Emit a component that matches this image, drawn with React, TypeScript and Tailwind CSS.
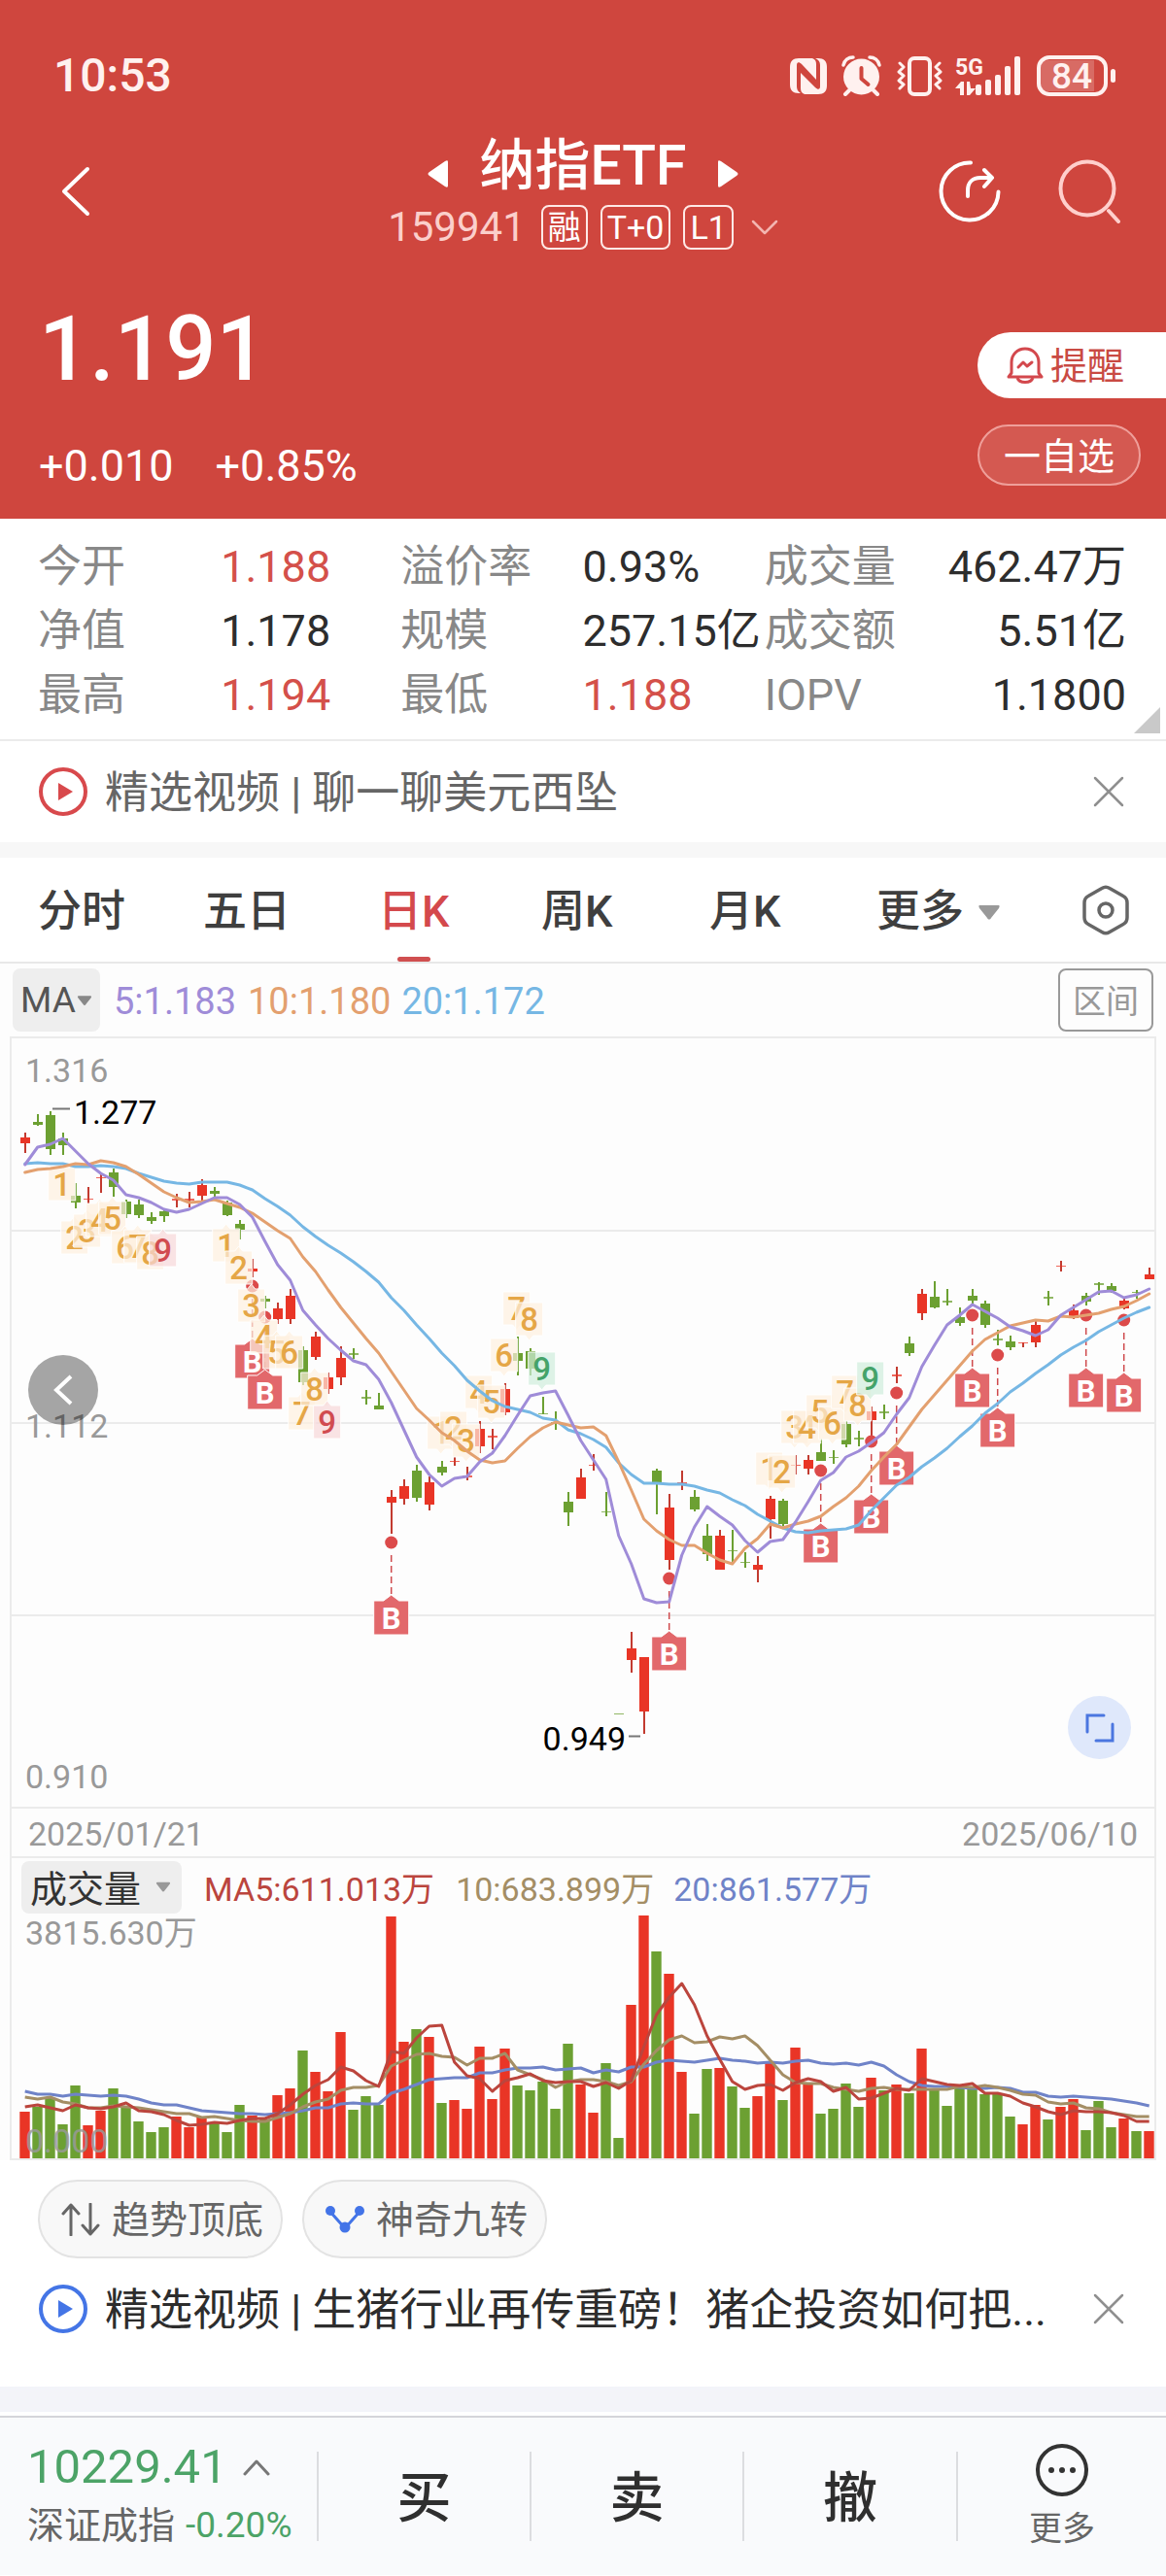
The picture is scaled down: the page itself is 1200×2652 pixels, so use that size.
import type { ReactNode } from "react";

const UP = "#e93526";
const DOWN = "#6ca032";

// high, low, body top, body bottom (plot pixels from the top of the panel), up day, volume
type Candle = [number, number, number, number, 0 | 1, number];

const CANDLES: Candle[] = [
  [98, 119, 103, 109, 1, 48],
  [79, 91, 87, 90, 0, 53],
  [76, 121, 80, 115, 0, 62],
  [98, 121, 104, 111, 0, 35],
  [150, 176, 163, 170, 0, 75],
  [154, 171, 166, 167, 1, 34],
  [139, 160, 144, 145, 1, 49],
  [135, 164, 139, 154, 0, 72],
  [167, 186, 169, 182, 0, 54],
  [167, 186, 172, 183, 0, 38],
  [180, 192, 185, 189, 0, 27],
  [178, 190, 179, 184, 0, 32],
  [161, 175, 166, 168, 1, 43],
  [159, 175, 166, 168, 1, 32],
  [146, 168, 152, 163, 1, 43],
  [154, 164, 158, 161, 0, 37],
  [168, 184, 170, 183, 0, 27],
  [188, 208, 192, 198, 0, 55],
  [228, 247, 238, 241, 1, 44],
  [266, 279, 269, 272, 0, 40],
  [273, 295, 279, 290, 1, 65],
  [259, 295, 266, 290, 1, 72],
  [318, 358, 322, 355, 0, 111],
  [303, 332, 308, 329, 1, 89],
  [345, 367, 350, 362, 1, 69],
  [318, 358, 330, 350, 1, 130],
  [320, 331, 325, 327, 0, 50],
  [363, 378, 370, 372, 0, 64],
  [366, 383, 379, 383, 0, 55],
  [466, 511, 473, 479, 1, 249],
  [455, 481, 462, 475, 1, 120],
  [440, 478, 446, 474, 0, 133],
  [452, 487, 458, 481, 1, 125],
  [436, 451, 442, 448, 0, 57],
  [432, 441, 436, 437, 1, 60],
  [442, 456, 451, 453, 1, 51],
  [395, 428, 403, 421, 1, 115],
  [403, 424, 410, 412, 1, 61],
  [356, 389, 362, 386, 1, 113],
  [308, 348, 325, 333, 0, 75],
  [320, 348, 323, 341, 0, 70],
  [370, 388, 387, 388, 0, 79],
  [385, 404, 396, 398, 0, 51],
  [468, 503, 478, 489, 0, 118],
  [444, 475, 453, 475, 1, 76],
  [429, 446, 440, 441, 1, 47],
  [468, 493, 488, 489, 0, 98],
  [697, 697, 696, 697, 0, 21],
  [612, 654, 629, 641, 1, 158],
  [638, 717, 638, 694, 1, 250],
  [444, 491, 446, 458, 0, 213],
  [470, 548, 484, 538, 1, 190],
  [446, 466, 458, 460, 1, 89],
  [466, 488, 473, 486, 0, 46],
  [501, 539, 513, 532, 0, 92],
  [507, 548, 513, 548, 1, 93],
  [507, 540, 528, 529, 0, 74],
  [530, 546, 540, 541, 0, 52],
  [534, 561, 543, 548, 1, 64],
  [472, 516, 475, 496, 1, 98],
  [475, 503, 477, 501, 0, 60],
  [430, 450, 440, 441, 1, 114],
  [430, 450, 435, 444, 1, 76],
  [413, 436, 427, 436, 0, 46],
  [425, 439, 432, 433, 0, 51],
  [395, 422, 398, 419, 0, 77],
  [405, 421, 412, 414, 0, 53],
  [380, 413, 385, 394, 1, 83],
  [378, 393, 385, 387, 0, 70],
  [339, 356, 347, 349, 1, 76],
  [308, 328, 315, 325, 0, 67],
  [259, 291, 264, 284, 1, 113],
  [251, 279, 267, 278, 0, 70],
  [259, 276, 271, 273, 0, 54],
  [278, 297, 288, 294, 0, 73],
  [259, 274, 266, 271, 0, 73],
  [271, 299, 274, 296, 0, 66],
  [301, 317, 310, 312, 0, 67],
  [307, 322, 313, 319, 0, 43],
  [314, 319, 314, 315, 1, 35],
  [292, 319, 296, 314, 1, 55],
  [261, 276, 267, 269, 0, 40],
  [230, 241, 235, 236, 1, 53],
  [275, 290, 281, 289, 1, 61],
  [263, 276, 266, 272, 0, 29],
  [252, 265, 253, 255, 0, 59],
  [253, 263, 256, 261, 0, 32],
  [269, 280, 271, 279, 1, 41],
  [260, 269, 262, 263, 0, 28],
  [237, 249, 244, 249, 1, 28],
];

const PRICE_MA5 = [
  131, 113, 110, 104, 117, 130, 140, 147, 162, 165, 170, 177, 180, 177, 171, 165, 165, 172, 185, 210,
  234, 250, 281, 296, 310, 322, 333, 337, 352, 376, 404, 432, 450, 462, 454, 452, 437, 428, 410, 389,
  369, 366, 364, 389, 415, 435, 455, 513, 542, 578, 582, 581, 533, 504, 483, 493, 502, 518, 530, 519,
  517, 499, 478, 456, 448, 432, 426, 417, 407, 388, 371, 339, 317, 296, 286, 275, 282, 289, 298, 302,
  307, 301, 286, 278, 270, 262, 261, 268, 265, 259,
];

const PRICE_MA10 = [
  139, 136, 135, 133, 130, 131, 127, 129, 133, 141, 150, 159, 165, 170, 169, 167, 171, 175, 181, 190,
  199, 207, 226, 241, 260, 278, 294, 310, 325, 344, 363, 382, 394, 407, 415, 426, 435, 438, 436, 423,
  411, 402, 396, 399, 402, 401, 410, 437, 466, 496, 508, 517, 523, 523, 531, 538, 542, 526, 516, 501,
  505, 501, 498, 493, 483, 474, 462, 446, 432, 419, 401, 383, 368, 353, 338, 323, 311, 304, 297, 294,
  291, 292, 287, 288, 286, 284, 280, 277, 271, 264,
];

const PRICE_MA20 = [
  130, 129, 130, 130, 133, 133, 132, 133, 135, 140, 144, 148, 150, 151, 149, 149, 149, 152, 157, 166,
  174, 183, 195, 205, 214, 222, 231, 241, 252, 268, 281, 296, 310, 325, 338, 353, 364, 374, 380, 383,
  386, 392, 394, 404, 408, 414, 422, 438, 450, 459, 459, 460, 460, 462, 466, 469, 476, 482, 491, 498,
  505, 509, 510, 508, 507, 506, 502, 487, 474, 461, 453, 442, 433, 423, 411, 400, 387, 377, 365, 356,
  346, 337, 327, 319, 312, 303, 296, 289, 283, 278,
];

// leading averages reach back before the first visible day
const VOL_HEAD5 = [53, 55, 52, 49];
const VOL_HEAD10 = [63, 61, 63, 58, 56, 52, 52, 54, 53];
const VOL_HEAD20 = [69, 66, 66, 64, 66, 65, 64, 65, 64, 61, 57, 55, 55, 52, 49, 48, 47, 46, 46];

// day index, y of the trade dot
const BUYS: [number, number][] = [
  [18, 256],
  [19, 288],
  [29, 520],
  [51, 557],
  [63, 446],
  [67, 416],
  [69, 366],
  [75, 286],
  [77, 327],
  [84, 286],
  [87, 291],
];

// day index, digit, top of the tag, pointer direction
const NINES: [number, number, number, "up" | "down"][] = [
  [3, 1, 134, "up"],
  [4, 2, 189, "up"],
  [5, 3, 182, "up"],
  [6, 4, 171, "up"],
  [7, 5, 169, "up"],
  [8, 6, 199, "up"],
  [9, 7, 198, "up"],
  [10, 8, 205, "up"],
  [11, 9, 202, "up"],
  [16, 1, 197, "up"],
  [17, 2, 220, "up"],
  [18, 3, 259, "up"],
  [19, 4, 291, "up"],
  [20, 5, 307, "up"],
  [21, 6, 307, "up"],
  [22, 7, 370, "up"],
  [23, 8, 345, "up"],
  [24, 9, 379, "up"],
  [33, 1, 390, "down"],
  [34, 2, 385, "down"],
  [35, 3, 398, "down"],
  [36, 4, 348, "down"],
  [37, 5, 358, "down"],
  [38, 6, 310, "down"],
  [39, 7, 262, "down"],
  [40, 8, 273, "down"],
  [41, 9, 324, "down"],
  [59, 1, 427, "down"],
  [60, 2, 430, "down"],
  [61, 3, 384, "down"],
  [62, 4, 384, "down"],
  [63, 5, 368, "down"],
  [64, 6, 380, "down"],
  [65, 7, 348, "down"],
  [66, 8, 361, "down"],
  [67, 9, 334, "down"],
];

const xOf = (i: number) => 25.7 + 13 * i;

const linePath = (ys: number[]) => "M" + ys.map((y, i) => `${xOf(i).toFixed(1)} ${y}`).join("L");

function volumeAverage(head: number[], span: number) {
  return CANDLES.map((_, i) => {
    if (i < head.length) return 250 - head[i];
    const days = CANDLES.slice(i - span + 1, i + 1);
    return 250 - Math.round(days.reduce((sum, c) => sum + c[5], 0) / span);
  });
}

function BuyTag({ x, dot }: { x: number; dot: number }) {
  const top = dot + 60;
  return (
    <g>
      <circle cx={x} cy={dot} r="6.5" fill="#dc4a4a" />
      <path d={`M${x} ${dot + 13}V${top - 6}`} stroke="#cf4a4d" strokeWidth="1.5" strokeDasharray="7 4" />
      <path
        d={`M${x - 18} ${top}h10l8 -6l8 6h10v35h-36z`}
        fill="#e2686b"
        stroke="#fff"
        strokeWidth="1"
      />
      <text x={x} y={top + 29} fontSize="31" fontWeight="700" textAnchor="middle" fill="#fff">
        B
      </text>
    </g>
  );
}

function NineTag({ x, n, top, dir }: { x: number; n: number; top: number; dir: "up" | "down" }) {
  const last = n === 9;
  const fill = !last ? "#fdf0de" : dir === "up" ? "#f7d7d9" : "#cfecdc";
  const ink = !last ? "#e5a646" : dir === "up" ? "#d14b50" : "#45a36a";
  const d =
    dir === "up"
      ? `M${x - 14} ${top}h10l4 -5l4 5h10v34h-28z`
      : `M${x - 14} ${top}h28v34h-10l-4 5l-4 -5h-10z`;
  return (
    <g>
      <path d={d} fill={fill} fillOpacity="0.7" stroke="#fff" strokeOpacity="0.9" strokeWidth="1" />
      <text x={x} y={top + 29} fontSize="33" fontWeight="500" textAnchor="middle" fill={ink}>
        {n}
      </text>
    </g>
  );
}

function PriceChart() {
  return (
    <svg viewBox="12 1 1176 791" className="block w-full" role="img" aria-label="日K">
      <g stroke="#ebebeb" strokeWidth="2">
        <path d="M12 199H1188M12 397H1188M12 595H1188" />
      </g>
      <g fontSize="34" fill="#999">
        <text x="26" y="46">1.316</text>
        <text x="26" y="412">1.112</text>
        <text x="26" y="773">0.910</text>
      </g>
      {CANDLES.map(([high, low, top, bottom, up], i) => {
        const x = Math.round(xOf(i));
        const thin = bottom - top <= 2;
        return (
          <g key={i} fill={up ? UP : DOWN}>
            {high !== low && <rect x={x - 1} y={high} width="2" height={low - high} fill={up ? "#c23b30" : DOWN} />}
            <rect x={x - 5} y={top} width="10" height={Math.max(bottom - top, 1)} opacity={thin ? 0.75 : 1} />
          </g>
        );
      })}
      {BUYS.map(([i, dot]) => (
        <BuyTag key={i} x={xOf(i)} dot={dot} />
      ))}
      {NINES.map(([i, n, top, dir]) => (
        <NineTag key={i} x={xOf(i) - 1} n={n} top={top} dir={dir} />
      ))}
      <g fill="none" strokeWidth="3" strokeLinejoin="round" strokeLinecap="round">
        <path d={linePath(PRICE_MA20)} stroke="#76b7e4" />
        <path d={linePath(PRICE_MA10)} stroke="#e3a06f" />
        <path d={linePath(PRICE_MA5)} stroke="#9f8cd8" />
      </g>
      <path d="M54 73.500H72M647 719.500H659" stroke="#777" strokeWidth="2" />
      <g fontSize="34" fill="#000">
        <text x="76" y="89">1.277</text>
        <text x="644" y="734" textAnchor="end">0.949</text>
      </g>
    </svg>
  );
}

function VolumeChart() {
  return (
    <svg viewBox="12 0 1176 250" className="block w-full overflow-visible" role="img" aria-label="成交量">
      {CANDLES.map((c, i) => (
        <rect key={i} x={xOf(i) - 5.4} y={250 - c[5]} width="10.4" height={c[5]} fill={c[4] ? UP : DOWN} />
      ))}
      <g fill="none" strokeWidth="3" strokeLinejoin="round">
        <path d={linePath(volumeAverage(VOL_HEAD20, 20))} stroke="#6f83c8" />
        <path d={linePath(volumeAverage(VOL_HEAD10, 10))} stroke="#a48e65" />
        <path d={linePath(volumeAverage(VOL_HEAD5, 5))} stroke="#bb453d" />
      </g>
      <g fontSize="34" fill="#999">
        <text x="26" y="30">3815.630万</text>
        <text x="26" y="244" fillOpacity="0.85">0.000</text>
      </g>
    </svg>
  );
}

function StatusIcons() {
  return (
    <div className="flex items-center text-[#fff1ef]" aria-hidden>
      <svg className="mr-[15px] h-[42px] w-[38px]" viewBox="0 0 38 42" fill="currentColor">
        <path d="M9 3h14c3 1 4 3 4 6v16L12 9C9 6 7 7 7 10v22c0 3 1 5 4 7H9c-6 0-9-3-9-9V12C0 6 3 3 9 3z" />
        <path d="M26 3h3c6 0 9 3 9 9v19c0 6-3 9-9 9H15c-3-1-4-3-4-6V18l15 15c3 3 5 2 5-1V10c0-3-1-5-5-7z" />
      </svg>
      <svg className="mr-[16px] h-[42px] w-[41px]" viewBox="0 0 41 42" fill="none" stroke="currentColor">
        <circle cx="20.500" cy="22" r="18.500" fill="currentColor" stroke="none" />
        <path d="M2 10C3 5 7 2 12 2M29 2c5 0 9 3 10 8" strokeWidth="3.500" strokeLinecap="round" />
        <path d="M8 36l-4 4M33 36l4 4" strokeWidth="4" strokeLinecap="round" />
        <path d="M20.500 13v11l7 6" stroke="#cf463e" strokeWidth="4" strokeLinecap="round" strokeLinejoin="round" />
      </svg>
      <svg className="mr-[13px] h-[42px] w-[47px]" viewBox="0 0 47 42" fill="none" stroke="currentColor">
        <rect x="13" y="3" width="21" height="37" rx="5" strokeWidth="4" />
        <path
          d="M3 8l4 4-5 5 5 4-5 5 5 4-4 4M44 8l-4 4 5 5-5 4 5 5-5 4 4 4"
          strokeWidth="3"
          strokeLinecap="round"
          strokeLinejoin="round"
        />
      </svg>
      <svg className="mr-[16px] h-[42px] w-[68px]" viewBox="0 0 68 42" fill="currentColor">
        <text x="0" y="20" fontSize="23" fontWeight="700">5G</text>
        <path d="M0 34l6-7h3v14H5v-7zM12 41V27h3l1 7h5l-6 7z" />
        <rect x="21" y="30" width="6" height="11" rx="2" />
        <rect x="31" y="25" width="6" height="16" rx="2" />
        <rect x="41" y="20" width="6" height="21" rx="2" />
        <rect x="51" y="11" width="6" height="30" rx="2" />
        <rect x="61" y="1" width="6" height="40" rx="2" />
      </svg>
      <svg className="h-[42px] w-[82px]" viewBox="0 0 82 42" fill="none">
        <path d="M12 5h47v32H12c-5 0-8-3-8-8V13c0-5 3-8 8-8z" fill="#fff" fillOpacity="0.2" />
        <rect x="2" y="2" width="69" height="38" rx="11" stroke="currentColor" strokeWidth="4" />
        <rect x="76" y="14" width="5" height="14" rx="2.500" fill="currentColor" />
        <text x="36" y="34" fontSize="37" fontWeight="500" textAnchor="middle" fill="currentColor">84</text>
      </svg>
    </div>
  );
}

function Tag({ children }: { children: ReactNode }) {
  return (
    <span className="flex h-[46px] items-center rounded-lg border-2 border-[#ffe9e6] px-[5px] text-[34px] leading-[40px] text-white">
      {children}
    </span>
  );
}

function Caret({ className }: { className: string }) {
  return (
    <svg viewBox="0 0 24 16" className={className} fill="currentColor" aria-hidden>
      <path d="M3 1h18c2 0 2 1 1 3L14 14c-1 2-3 2-4 0L2 4C1 2 1 1 3 1z" />
    </svg>
  );
}

function Header() {
  return (
    <header className="bg-[#cf463e] pb-[30px] pt-[54px] text-white">
      <div className="flex h-[48px] items-center justify-between pl-[55px] pr-[51px]">
        <span className="text-[48px] font-medium leading-[48px] text-[#fff1ef]">10:53</span>
        <StatusIcons />
      </div>

      <div className="mt-[34px] grid grid-cols-[1fr_auto_1fr] items-center">
        <button className="ml-[60px] justify-self-start" aria-label="返回">
          <svg className="h-[54px] w-[34px]" viewBox="0 0 34 54" fill="none" stroke="currentColor" strokeWidth="4">
            <path d="M30 4L6 27l24 23" strokeLinecap="round" strokeLinejoin="round" />
          </svg>
        </button>
        <div className="flex flex-col items-center">
          <div className="flex items-center gap-[32px]">
            <button aria-label="上一只">
              <svg className="mt-[20px] h-[28px] w-[22px]" viewBox="0 0 22 28" fill="currentColor">
                <path d="M21 2v24c0 2-1 2-3 1L2 16c-2-1-2-3 0-4L18 1c2-1 3-1 3 1z" />
              </svg>
            </button>
            <h1 className="pt-[4px] text-[57px] font-medium leading-[62px]">纳指ETF</h1>
            <button aria-label="下一只">
              <svg className="mt-[20px] h-[28px] w-[22px]" viewBox="0 0 22 28" fill="currentColor">
                <path d="M1 2v24c0 2 1 2 3 1l16-11c2-1 2-3 0-4L4 1C2 0 1 0 1 2z" />
              </svg>
            </button>
          </div>
          <div className="mt-[9px] flex items-center gap-[13px]">
            <span className="mr-[3px] text-[42px] leading-[46px] text-[#fbcfcb]">159941</span>
            <Tag>融</Tag>
            <Tag>T+0</Tag>
            <Tag>L1</Tag>
            <button aria-label="展开" className="ml-[5px]">
              <svg className="h-[16px] w-[28px]" viewBox="0 0 28 16" fill="none" stroke="#f3b5b0" strokeWidth="2.500">
                <path d="M2 2l12 12L26 2" strokeLinecap="round" strokeLinejoin="round" />
              </svg>
            </button>
          </div>
        </div>
        <div className="flex items-center gap-[59px] justify-self-end pr-[47px]">
          <button aria-label="分享">
            <svg className="h-[66px] w-[64px]" viewBox="0 0 64 66" fill="none" stroke="currentColor" strokeWidth="4">
              <path d="M33 3.500a29.500 29.500 0 1 0 28.500 30" strokeLinecap="round" />
              <path d="M30 38v-6c0-8 5-13 13-13h11M47 11l8 8-8 9" strokeLinecap="round" strokeLinejoin="round" />
            </svg>
          </button>
          <button aria-label="搜索">
            <svg className="h-[66px] w-[64px]" viewBox="0 0 64 66" fill="none" stroke="#ffcfcc" strokeWidth="4">
              <circle cx="30" cy="30" r="27.500" />
              <path d="M52 53l10 11" strokeLinecap="round" />
            </svg>
          </button>
        </div>
      </div>

      <div className="mt-[56px] flex justify-between">
        <div className="pl-[40px]">
          <p className="pt-[4px] text-[92px] font-medium leading-[86px]">1.191</p>
          <p className="mt-[53px] flex gap-[43px] text-[45px] leading-[48px]">
            <span>+0.010</span>
            <span>+0.85%</span>
          </p>
        </div>
        <div className="flex flex-col items-end gap-[27px] pt-[29px]">
          <button className="flex h-[68px] items-center gap-[7px] rounded-l-full bg-white pl-[30px] pr-[43px] text-[38px] leading-[48px] text-[#c94a43]">
            <svg className="h-[38px] w-[38px]" viewBox="0 0 38 38" fill="none" stroke="#d3484d" strokeWidth="3">
              <path d="M5 27V16C5 8 11 2 19 2s14 6 14 14v11l3 4H2z" strokeLinejoin="round" />
              <path d="M11 32c2 6 14 6 16 0" />
              <path d="M12 21l5-5 4 4 5-4" strokeLinecap="round" strokeLinejoin="round" />
            </svg>
            <span className="pt-[2px]">提醒</span>
          </button>
          <button className="mr-[26px] h-[63px] rounded-full border-2 border-[#ef9f9a] bg-white/10 px-[25px] pt-[2px] text-[38px] leading-[48px]">
            一自选
          </button>
        </div>
      </div>
    </header>
  );
}

const STATS: [string, string, boolean][] = [
  ["今开", "1.188", true],
  ["溢价率", "0.93%", false],
  ["成交量", "462.47万", false],
  ["净值", "1.178", false],
  ["规模", "257.15亿", false],
  ["成交额", "5.51亿", false],
  ["最高", "1.194", true],
  ["最低", "1.188", true],
  ["IOPV", "1.1800", false],
];

function Stats() {
  return (
    <section className="relative border-b-2 border-[#ebebeb] pb-[12px] pt-[17px]">
      <dl className="grid grid-cols-[188fr_185fr_187fr_187fr_152fr_220fr] whitespace-nowrap pl-[39px] pr-[41px] text-[45px] leading-[66px]">
        {STATS.map(([label, value, red], i) => (
          <div key={label} className="contents">
            <dt className="text-[#888]">{label}</dt>
            <dd className={`${red ? "text-[#d4504a]" : "text-[#2d2d2d]"} ${i % 3 === 2 ? "text-right" : ""}`}>
              {value}
            </dd>
          </div>
        ))}
      </dl>
      <svg className="absolute bottom-[6px] right-[6px] h-[27px] w-[27px]" viewBox="0 0 27 27" fill="#c9c9c9" aria-hidden>
        <path d="M27 0v27H0z" />
      </svg>
    </section>
  );
}

function Promo({ accent, text, tone }: { accent: string; text: string; tone: string }) {
  return (
    <div className="flex items-center pl-[39px] pr-[43px]">
      <svg className="h-[52px] w-[52px] shrink-0" viewBox="0 0 52 52" fill="none" aria-hidden>
        <circle cx="26" cy="26" r="23" stroke={accent} strokeWidth="4" />
        <path d="M21 17l15 9-15 9z" fill={accent} />
      </svg>
      <a href="#video" className={`ml-[17px] mr-auto whitespace-nowrap pt-[4px] text-[45px] leading-[56px] ${tone}`}>
        {text}
      </a>
      <button aria-label="关闭">
        <svg className="h-[32px] w-[32px]" viewBox="0 0 32 32" fill="none" stroke="#8f8f8f" strokeWidth="2.500">
          <path d="M2 2l28 28M30 2L2 30" strokeLinecap="round" />
        </svg>
      </button>
    </div>
  );
}

const TABS = ["分时", "五日", "日K", "周K", "月K"];

function PeriodTabs() {
  return (
    <nav className="grid h-[109px] grid-cols-[170fr_180fr_168fr_173fr_172fr_212fr_86fr] border-b-2 border-[#e8e8e8] pl-[39px] text-[45px] leading-[103px] text-[#3f3f3f]">
      {TABS.map((tab) => {
        const active = tab === "日K";
        return (
          <button
            key={tab}
            className={`relative justify-self-start pt-[4px] font-medium ${active ? "text-[#d4494c]" : ""}`}
          >
            {tab}
            {active && (
              <span className="absolute bottom-0 left-1/2 h-[5px] w-[34px] -translate-x-1/2 rounded-full bg-[#d04f50]" />
            )}
          </button>
        );
      })}
      <button className="flex items-center gap-[14px] justify-self-start pt-[4px] font-medium">
        更多
        <Caret className="h-[16px] w-[24px] text-[#999]" />
      </button>
      <button aria-label="设置" className="justify-self-start">
        <svg className="h-[52px] w-[48px]" viewBox="0 0 48 52" fill="none" stroke="#666" strokeWidth="3.500">
          <path d="M20 3.500q4-2.500 8 0l14 8q4 2 4 7v15q0 5-4 7l-14 8q-4 2.500-8 0l-14-8q-4-2-4-7v-15q0-5 4-7z" />
          <circle cx="24" cy="26" r="7" />
        </svg>
      </button>
    </nav>
  );
}

function ChartPanel() {
  return (
    <section className="bg-[#fdfdfd]">
      <div className="flex h-[75px] items-center whitespace-nowrap pl-[13px] pr-[13px] text-[38px] leading-[48px]">
        <label className="flex h-[65px] w-[90px] items-center justify-center rounded-lg bg-[#eee] text-[#555]">
          <select aria-label="均线" className="w-[58px] appearance-none bg-transparent text-[37px] leading-[48px]">
            <option>MA</option>
          </select>
          <Caret className="h-[12px] w-[16px] text-[#888]" />
        </label>
        <span className="ml-[14px] pt-[2px] text-[#9f8cd8]">5:1.183</span>
        <span className="ml-[12px] pt-[2px] text-[#e3a06f]">10:1.180</span>
        <span className="ml-[11px] pt-[2px] text-[#76b7e4]">20:1.172</span>
        <button className="ml-auto h-[65px] rounded-lg border-2 border-[#999] px-[13px] pt-[2px] text-[34px] leading-[48px] text-[#999]">
          区间
        </button>
      </div>

      <div className="mx-[10px] border-2 border-[#ebebeb]">
        <div className="relative">
          <PriceChart />
          <button
            aria-label="向左"
            className="absolute left-[17px] top-[326px] flex h-[72px] w-[72px] items-center justify-center rounded-full bg-black/35"
          >
            <svg className="h-[34px] w-[20px]" viewBox="0 0 20 34" fill="none" stroke="#fff" strokeWidth="4">
              <path d="M18 3L3 17l15 14" />
            </svg>
          </button>
          <button
            aria-label="全屏"
            className="absolute bottom-[49px] right-[24px] flex h-[65px] w-[65px] items-center justify-center rounded-full bg-[#dfe8fb]"
          >
            <svg className="h-[30px] w-[30px]" viewBox="0 0 30 30" fill="none" stroke="#4b76e0" strokeWidth="3">
              <path d="M2 19V2h17M28 11v17H11" strokeLinecap="round" />
            </svg>
          </button>
        </div>
        <div className="flex h-[51px] items-center justify-between border-t-2 border-[#ebebeb] px-[17px] pt-[2px] text-[34px] leading-[44px] text-[#999]">
          <span>2025/01/21</span>
          <span>2025/06/10</span>
        </div>
        <div className="flex h-[61px] items-center whitespace-nowrap border-t-2 border-[#ebebeb] pl-[10px] text-[34px] leading-[48px]">
          <label className="flex h-[54px] items-center rounded-lg bg-[#eee] pl-[9px] pr-[11px] text-[#333]">
            <select aria-label="指标" className="appearance-none bg-transparent pt-[4px] text-[38px] leading-[48px]">
              <option>成交量</option>
            </select>
            <Caret className="ml-[14px] h-[11px] w-[16px] text-[#999]" />
          </label>
          <span className="ml-[23px] pt-[4px] text-[#bb453d]">MA5:611.013万</span>
          <span className="ml-[22px] pt-[4px] text-[#a48e65]">10:683.899万</span>
          <span className="ml-[20px] pt-[4px] text-[#6f83c8]">20:861.577万</span>
        </div>
        <VolumeChart />
      </div>
    </section>
  );
}

function ToolChips() {
  const chip =
    "flex h-[81px] items-center rounded-full border-2 border-[#e3e3e3] bg-[#f8f8f8] text-[39px] leading-[48px] text-[#666]";
  return (
    <div className="flex gap-[20px] pl-[39px] pt-[20px]">
      <button className={`${chip} gap-[12px] pl-[22px] pr-[18px]`}>
        <svg className="h-[34px] w-[40px]" viewBox="0 0 40 34" fill="none" stroke="#666" strokeWidth="3">
          <path d="M2 11l8-9 8 9M10 2v31M22 23l8 9 8-9M30 32V1" strokeLinecap="round" strokeLinejoin="round" />
        </svg>
        <span className="pt-[2px]">趋势顶底</span>
      </button>
      <button className={`${chip} gap-[11px] pl-[21px] pr-[18px]`}>
        <svg className="h-[30px] w-[42px]" viewBox="0 0 42 30" fill="#4374e8" stroke="#4374e8">
          <path d="M5 6l16 18L37 6" fill="none" strokeWidth="3" />
          <circle cx="6" cy="6" r="5" stroke="none" />
          <circle cx="36" cy="6" r="5" stroke="none" />
          <circle cx="21" cy="23" r="5.500" stroke="none" />
        </svg>
        <span className="pt-[2px]">神奇九转</span>
      </button>
    </div>
  );
}

function TradeBar() {
  return (
    <footer className="grid h-[164px] grid-cols-[326fr_219fr_219fr_220fr_216fr] items-center border-t-2 border-[#d4d5da] bg-[#f9fafc]">
      <button className="whitespace-nowrap pl-[28px] text-left">
        <span className="flex items-center gap-[16px] text-[49px] leading-[60px] text-[#4ca367]">
          10229.41
          <svg className="h-[18px] w-[28px]" viewBox="0 0 28 18" fill="none" stroke="#777" strokeWidth="3">
            <path d="M2 16L14 3l12 13" strokeLinecap="round" strokeLinejoin="round" />
          </svg>
        </span>
        <span className="flex items-center gap-[11px] text-[38px] leading-[60px] text-[#666]">
          深证成指
          <span className="text-[37px] text-[#4ca367]">-0.20%</span>
        </span>
      </button>
      {["买", "卖", "撤"].map((action) => (
        <button
          key={action}
          className="h-[92px] border-l-2 border-[#dcdde0] pt-[4px] text-[56px] font-medium leading-[88px] text-[#2f2f2f]"
        >
          {action}
        </button>
      ))}
      <div className="flex h-[92px] items-center justify-center border-l-2 border-[#dcdde0]">
        <button className="flex flex-col items-center text-[34px] leading-[44px] text-[#666]">
          <svg className="mb-[10px] h-[56px] w-[56px]" viewBox="0 0 56 56" fill="none" aria-hidden>
            <circle cx="28" cy="28" r="25" stroke="#333" strokeWidth="4" />
            <g fill="#333">
              <circle cx="17" cy="28" r="3" />
              <circle cx="28" cy="28" r="3" />
              <circle cx="39" cy="28" r="3" />
            </g>
          </svg>
          更多
        </button>
      </div>
    </footer>
  );
}

export default function App() {
  return (
    <div className="w-full bg-white font-['Roboto','Noto_Sans_CJK_SC',sans-serif]">
      <Header />
      <Stats />
      <section className="border-b-16 border-[#f7f7f7] py-[22px]">
        <Promo accent="#d8494c" tone="text-[#666]" text="精选视频 | 聊一聊美元西坠" />
      </section>
      <PeriodTabs />
      <ChartPanel />
      <ToolChips />
      <section className="border-b-26 border-[#f3f4f9] pb-[50px] pt-[22px]">
        <Promo accent="#4475e6" tone="text-[#2d2d2d]" text="精选视频 | 生猪行业再传重磅！猪企投资如何把..." />
      </section>
      <div className="h-[4px]" />
      <TradeBar />
    </div>
  );
}
